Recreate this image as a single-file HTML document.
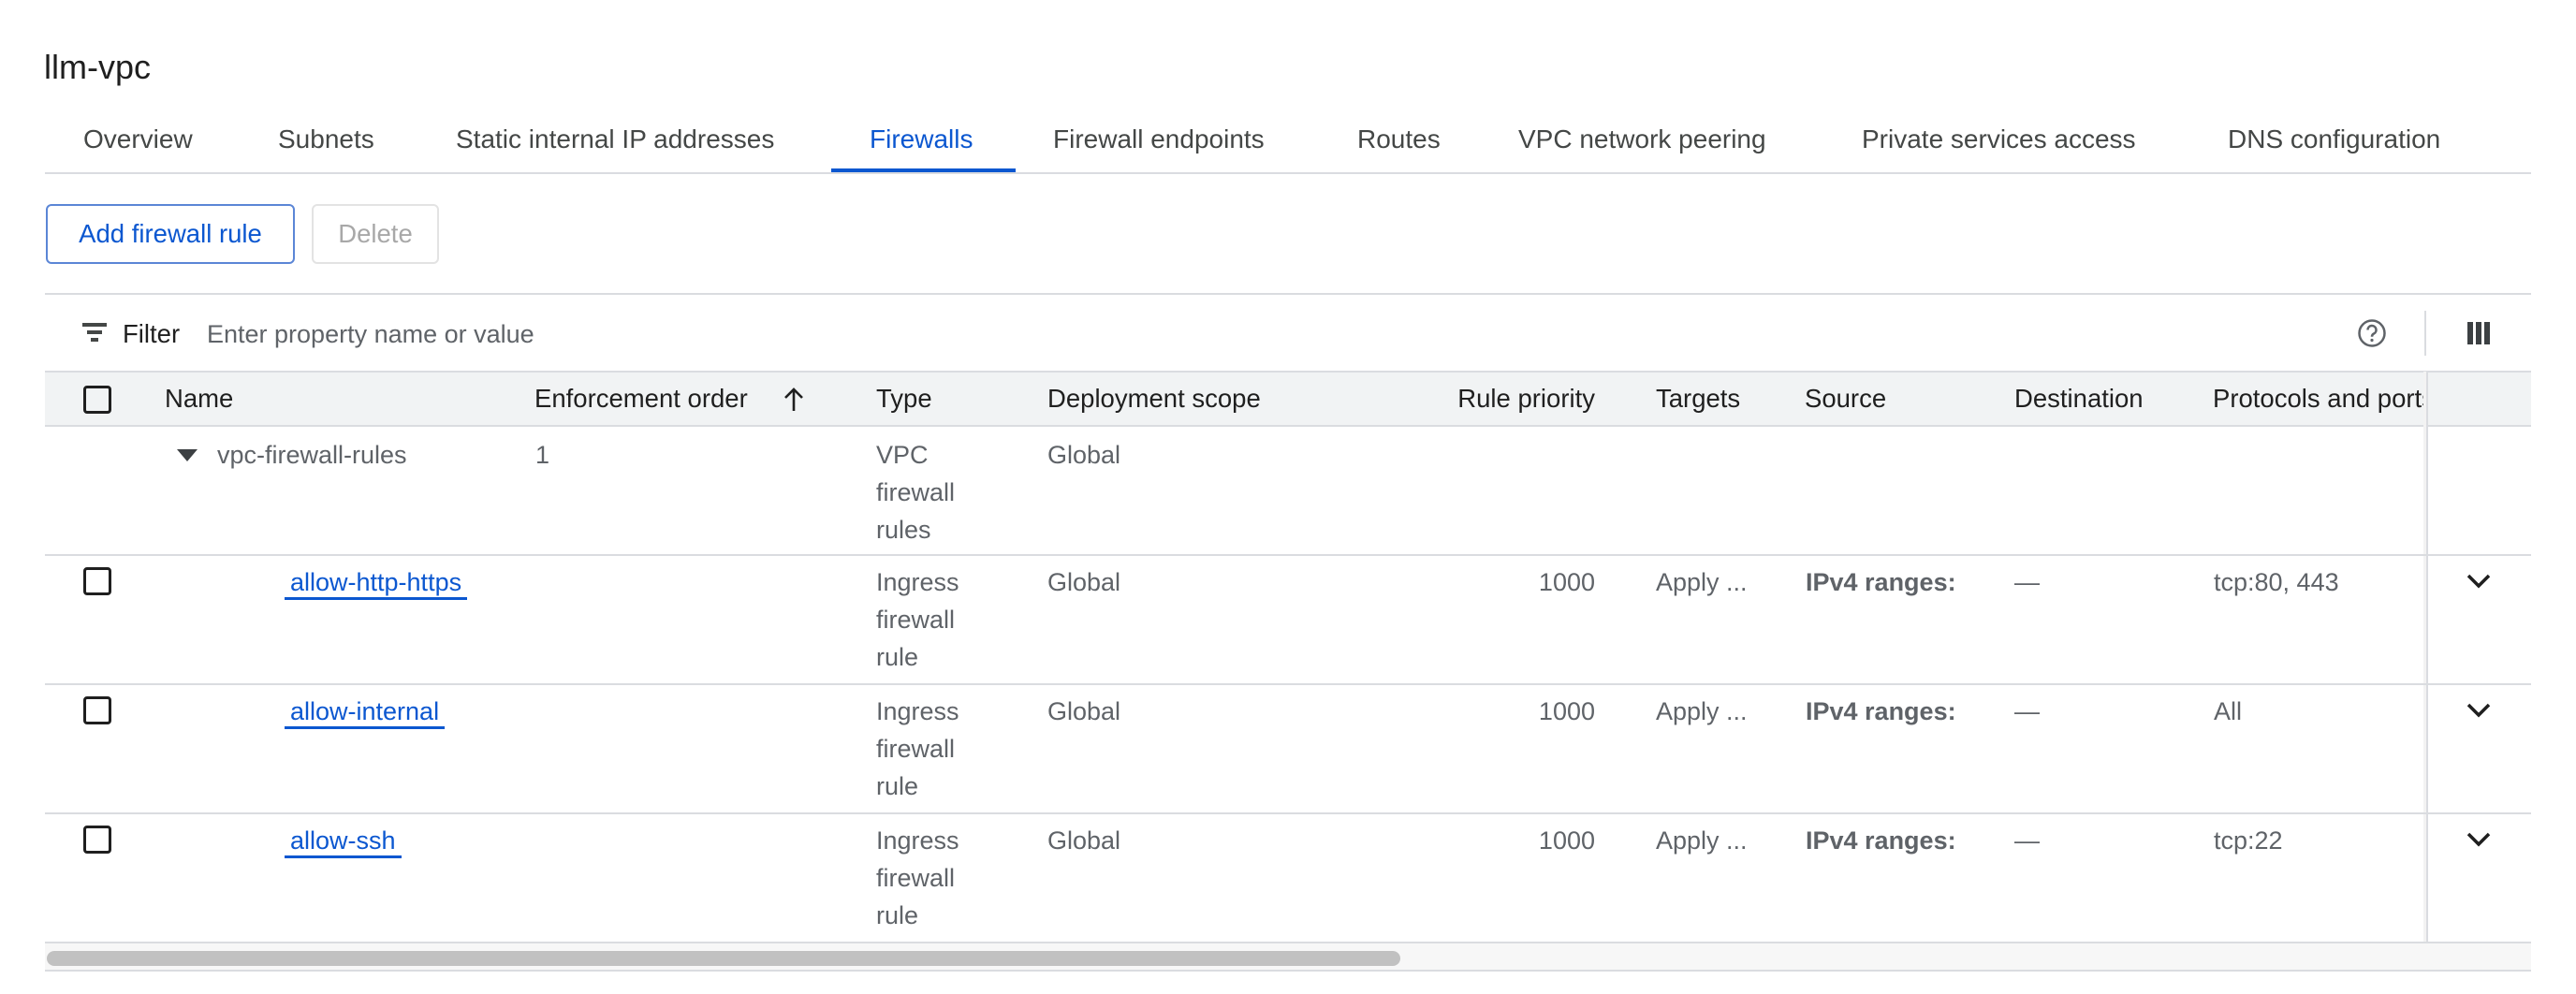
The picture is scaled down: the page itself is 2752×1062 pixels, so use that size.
<!DOCTYPE html>
<html><head><meta charset="utf-8"><style>
*{margin:0;padding:0;box-sizing:border-box}
body{width:2752px;height:1062px;background:#fff;position:relative;overflow:hidden;font-family:"Liberation Sans",Arial,sans-serif;color:#1f1f1f}
.a{position:absolute;white-space:nowrap}
.tab{position:absolute;top:131px;font-size:28px;color:#444746;line-height:36px;white-space:nowrap}
.h{position:absolute;top:410px;font-size:27.5px;color:#1f1f1f;line-height:32px;white-space:nowrap}
.t{position:absolute;font-size:27px;color:#5f6368;line-height:40px;white-space:nowrap}
.lnk{color:#0b57d0;border-bottom:3px solid #0b57d0;padding:0 6px 1px 6px}
.cb{position:absolute;left:89px;width:30px;height:30px;border:3px solid #1f1f1f;border-radius:4px}
.hr{position:absolute;left:48px;width:2656px;height:2px;background:#dadce0}
.chev{position:absolute;left:2633px;width:30px;height:30px}
</style></head><body>
<div class="a" style="left:47px;top:51px;font-size:36px;color:#1f1f1f;line-height:42px">llm-vpc</div>

<div class="tab" style="left:89px">Overview</div>
<div class="tab" style="left:297px">Subnets</div>
<div class="tab" style="left:487px">Static internal IP addresses</div>
<div class="tab" style="left:929px;color:#0b57d0">Firewalls</div>
<div class="tab" style="left:1125px">Firewall endpoints</div>
<div class="tab" style="left:1450px">Routes</div>
<div class="tab" style="left:1622px">VPC network peering</div>
<div class="tab" style="left:1989px">Private services access</div>
<div class="tab" style="left:2380px">DNS configuration</div>
<div class="a" style="left:888px;top:180px;width:197px;height:5px;background:#0b57d0"></div>
<div class="hr" style="top:184px"></div>

<div class="a" style="left:49px;top:218px;width:266px;height:64px;border:2px solid #5b86d6;border-radius:6px;color:#0b57d0;font-size:27.5px;line-height:60px;text-align:center">Add firewall rule</div>
<div class="a" style="left:333px;top:218px;width:136px;height:64px;border:2px solid #e3e3e3;border-radius:6px;color:#a8a8a8;font-size:27.5px;line-height:60px;text-align:center">Delete</div>

<div class="hr" style="top:313px"></div>
<svg class="a" style="left:88px;top:345px" width="28" height="22" viewBox="0 0 28 22"><rect x="0" y="0" width="26" height="4" fill="#444746"/><rect x="5" y="8" width="16" height="4" fill="#444746"/><rect x="9" y="16" width="8" height="4" fill="#444746"/></svg>
<div class="a" style="left:131px;top:340px;font-size:27.5px;color:#1f1f1f;line-height:34px">Filter</div>
<div class="a" style="left:221px;top:340px;font-size:27px;color:#5f6368;line-height:34px">Enter property name or value</div>
<svg class="a" style="left:2518px;top:340px" width="32" height="32" viewBox="0 0 32 32"><circle cx="16" cy="16" r="13.5" fill="none" stroke="#5f6368" stroke-width="2.5"/><path d="M11.5 12.5a4.5 4.5 0 1 1 6.5 4c-1.5.8-2 1.6-2 3.2" fill="none" stroke="#5f6368" stroke-width="2.5"/><circle cx="16" cy="23.5" r="1.6" fill="#5f6368"/></svg>
<div class="a" style="left:2590px;top:332px;width:2px;height:48px;background:#dadce0"></div>
<div class="a" style="left:2636px;top:344px;width:6px;height:24px;background:#3c4043"></div>
<div class="a" style="left:2645px;top:344px;width:6px;height:24px;background:#3c4043"></div>
<div class="a" style="left:2654px;top:344px;width:6px;height:24px;background:#3c4043"></div>

<!-- header -->
<div class="a" style="left:48px;top:397px;width:2656px;height:58px;background:#f1f3f4"></div>
<div class="hr" style="top:396px"></div>
<div class="hr" style="top:454px"></div>
<div class="cb" style="top:412px"></div>
<div class="h" style="left:176px">Name</div>
<div class="h" style="left:571px">Enforcement order</div>
<svg class="a" style="left:836px;top:413px" width="24" height="28" viewBox="0 0 24 28"><path d="M12 26V3M3 12l9-9 9 9" fill="none" stroke="#1f1f1f" stroke-width="2.6"/></svg>
<div class="h" style="left:936px">Type</div>
<div class="h" style="left:1119px">Deployment scope</div>
<div class="h" style="left:1504px;width:200px;text-align:right">Rule priority</div>
<div class="h" style="left:1769px">Targets</div>
<div class="h" style="left:1928px">Source</div>
<div class="h" style="left:2152px">Destination</div>
<div class="h" style="left:2364px;width:227px;height:34px;overflow:hidden">Protocols and ports</div>
<div class="a" style="left:2592px;top:397px;width:2px;height:610px;background:#dadce0"></div>
<div class="a" style="left:2589px;top:397px;width:3px;height:610px;background:#f3f3f3"></div>

<!-- group row -->
<svg class="a" style="left:189px;top:480px" width="22" height="13" viewBox="0 0 22 13"><path d="M0 0h22L11 13z" fill="#3c4043"/></svg>
<div class="t" style="left:232px;top:466px">vpc-firewall-rules</div>
<div class="t" style="left:572px;top:466px">1</div>
<div class="t" style="left:936px;top:466px">VPC<br>firewall<br>rules</div>
<div class="t" style="left:1119px;top:466px">Global</div>
<div class="hr" style="top:592px"></div>

<!-- rows -->
<div class="cb" style="top:606px"></div>
<div class="t" style="left:304px;top:602px"><span class="lnk">allow-http-https</span></div>
<div class="t" style="left:936px;top:602px">Ingress<br>firewall<br>rule</div>
<div class="t" style="left:1119px;top:602px">Global</div>
<div class="t" style="left:1604px;top:602px;width:100px;text-align:right">1000</div>
<div class="t" style="left:1769px;top:602px">Apply ...</div>
<div class="t" style="left:1929px;top:602px;font-weight:bold;color:#5f6368">IPv4 ranges:</div>
<div class="t" style="left:2152px;top:602px">—</div>
<div class="t" style="left:2365px;top:602px">tcp:80, 443</div>
<svg class="chev" style="top:606px" viewBox="0 0 30 30"><path d="M4 9l11 11 11-11" fill="none" stroke="#1f1f1f" stroke-width="3.5"/></svg>
<div class="hr" style="top:730px"></div>

<div class="cb" style="top:744px"></div>
<div class="t" style="left:304px;top:740px"><span class="lnk">allow-internal</span></div>
<div class="t" style="left:936px;top:740px">Ingress<br>firewall<br>rule</div>
<div class="t" style="left:1119px;top:740px">Global</div>
<div class="t" style="left:1604px;top:740px;width:100px;text-align:right">1000</div>
<div class="t" style="left:1769px;top:740px">Apply ...</div>
<div class="t" style="left:1929px;top:740px;font-weight:bold;color:#5f6368">IPv4 ranges:</div>
<div class="t" style="left:2152px;top:740px">—</div>
<div class="t" style="left:2365px;top:740px">All</div>
<svg class="chev" style="top:744px" viewBox="0 0 30 30"><path d="M4 9l11 11 11-11" fill="none" stroke="#1f1f1f" stroke-width="3.5"/></svg>
<div class="hr" style="top:868px"></div>

<div class="cb" style="top:882px"></div>
<div class="t" style="left:304px;top:878px"><span class="lnk">allow-ssh</span></div>
<div class="t" style="left:936px;top:878px">Ingress<br>firewall<br>rule</div>
<div class="t" style="left:1119px;top:878px">Global</div>
<div class="t" style="left:1604px;top:878px;width:100px;text-align:right">1000</div>
<div class="t" style="left:1769px;top:878px">Apply ...</div>
<div class="t" style="left:1929px;top:878px;font-weight:bold;color:#5f6368">IPv4 ranges:</div>
<div class="t" style="left:2152px;top:878px">—</div>
<div class="t" style="left:2365px;top:878px">tcp:22</div>
<svg class="chev" style="top:882px" viewBox="0 0 30 30"><path d="M4 9l11 11 11-11" fill="none" stroke="#1f1f1f" stroke-width="3.5"/></svg>
<div class="hr" style="top:1006px"></div>

<div class="a" style="left:48px;top:1008px;width:2656px;height:29px;background:#f7f7f7"></div>
<div class="a" style="left:50px;top:1016px;width:1446px;height:16px;background:#c1c1c1;border-radius:8px"></div>
<div class="hr" style="top:1036px"></div>
</body></html>
